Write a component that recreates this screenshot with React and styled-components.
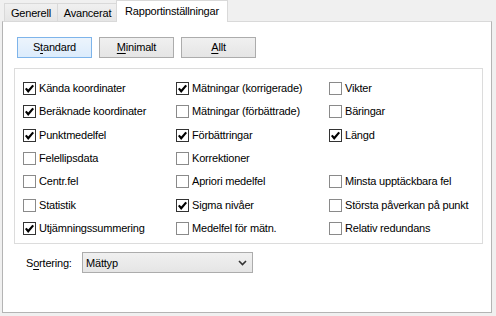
import React, { useState } from "react";
import styled, { createGlobalStyle } from "styled-components";

const GlobalStyle = createGlobalStyle`
  html, body {
    margin: 0;
    padding: 0;
    background: #f0f0f0;
  }
  body {
    font-family: "Liberation Sans", Arial, sans-serif;
    font-size: 11px;
    letter-spacing: -0.2px;
    color: #000;
  }
`;

const items = [
  ["Kända koordinater", true],
  ["Mätningar (korrigerade)", true],
  ["Vikter", false],
  ["Beräknade koordinater", true],
  ["Mätningar (förbättrade)", false],
  ["Bäringar", false],
  ["Punktmedelfel", true],
  ["Förbättringar", true],
  ["Längd", true],
  ["Felellipsdata", false],
  ["Korrektioner", false],
  null,
  ["Centr.fel", false],
  ["Apriori medelfel", false],
  ["Minsta upptäckbara fel", false],
  ["Statistik", false],
  ["Sigma nivåer", true],
  ["Största påverkan på punkt", false],
  ["Utjämningssummering", true],
  ["Medelfel för mätn.", false],
  ["Relativ redundans", false],
];

function App() {
  const [checks, setChecks] = useState(items.map((it) => (it ? it[1] : false)));

  const toggle = (i) => {
    const next = [...checks];
    next[i] = !next[i];
    setChecks(next);
  };

  return (
    <Window>
      <GlobalStyle />
      <TabStrip>
        <Tab w={53}>Generell</Tab>
        <Tab w={60}>Avancerat</Tab>
        <Tab w={112} active>Rapportinställningar</Tab>
      </TabStrip>
      <Panel>
        <ButtonRow>
          <Button primary>
            S<u>t</u>andard
          </Button>
          <Button>
            <u>M</u>inimalt
          </Button>
          <Button>
            <u>A</u>llt
          </Button>
        </ButtonRow>

        <GroupBox>
          {items.map((it, i) =>
            it ? (
              <CheckRow key={i} onClick={() => toggle(i)}>
                <Box checked={checks[i]}>
                  {checks[i] && (
                    <svg width="11" height="11" viewBox="0 0 11 11">
                      <path d="M1.8 5.4 L4.2 8.2 L9.2 2.4" fill="none" stroke="#000" strokeWidth="2.2" />
                    </svg>
                  )}
                </Box>
                <Label>{it[0]}</Label>
              </CheckRow>
            ) : (
              <span key={i} />
            )
          )}
        </GroupBox>

        <SortRow>
          <SortLabel>
            S<u>o</u>rtering:
          </SortLabel>
          <Select>
            <span>Mättyp</span>
            <svg width="9" height="6" viewBox="0 0 9 6">
              <path d="M1 1 L4.5 4.5 L8 1" fill="none" stroke="#333" strokeWidth="1.6" />
            </svg>
          </Select>
        </SortRow>
      </Panel>
    </Window>
  );
}

const Window = styled.div`
  width: 496px;
  height: 316px;
  box-sizing: border-box;
  padding: 0 4px 0 2px;
  background: #f0f0f0;
`;

const TabStrip = styled.div`
  display: flex;
  align-items: flex-end;
  height: 22px;
  padding-left: 2px;
  position: relative;
  z-index: 1;
  margin-bottom: -1px;
`;

const Tab = styled.div`
  box-sizing: border-box;
  width: ${(p) => p.w}px;
  height: ${(p) => (p.active ? "22px" : "19px")};
  padding-top: ${(p) => (p.active ? "3px" : "2px")};
  margin-left: ${(p) => (p.active ? "-1px" : "0")};
  text-align: center;
  border: 1px solid #d9d9d9;
  border-bottom: ${(p) => (p.active ? "none" : "1px solid #d9d9d9")};
  border-right: ${(p) => (p.active ? "1px solid #d9d9d9" : "none")};
  background: ${(p) => (p.active ? "#fff" : "linear-gradient(#f0f0f0, #e5e5e5)")};
  line-height: 14px;
  white-space: nowrap;
`;

const Panel = styled.div`
  box-sizing: border-box;
  height: 292px;
  background: #fff;
  border: 1px solid #b4b4b4;
  border-top-color: #d9d9d9;
  padding: 15px 0 0 14px;
`;

const ButtonRow = styled.div`
  display: flex;
  gap: 7px;
`;

const Button = styled.div`
  box-sizing: border-box;
  width: 75px;
  height: 21px;
  line-height: 19px;
  text-align: center;
  border: 1px solid ${(p) => (p.primary ? "#7eb4ea" : "#acacac")};
  background: ${(p) => (p.primary ? "linear-gradient(#ecf4fc, #dcecfc)" : "linear-gradient(#f0f0f0, #e5e5e5)")};
  cursor: default;
  u {
    text-decoration-thickness: 1px;
    text-underline-offset: 2px;
  }
`;

const GroupBox = styled.div`
  box-sizing: border-box;
  width: 469px;
  height: 176px;
  margin: 10px 0 0 -3px;
  border: 1px solid #dcdcdc;
  padding: 13px 0 0 8px;
  display: grid;
  grid-template-columns: 153px 153px 153px;
  grid-auto-rows: 23.33px;
`;

const CheckRow = styled.label`
  display: flex;
  align-items: flex-start;
  gap: 3px;
  cursor: default;
  user-select: none;
`;

const Box = styled.span`
  box-sizing: border-box;
  width: 13px;
  height: 13px;
  flex: none;
  border: 1px solid ${(p) => (p.checked ? "#333" : "#8a8a8a")};
  background: #fff;
  display: flex;
  align-items: center;
  justify-content: center;
`;

const Label = styled.span`
  line-height: 13px;
  white-space: nowrap;
`;

const SortRow = styled.div`
  display: flex;
  align-items: center;
  margin-top: 8px;
  padding-left: 9px;
`;

const SortLabel = styled.span`
  width: 56px;
  u {
    text-underline-offset: 2px;
  }
`;

const Select = styled.div`
  box-sizing: border-box;
  width: 171px;
  height: 21px;
  border: 1px solid #acacac;
  background: linear-gradient(#f0f0f0, #e5e5e5);
  display: flex;
  align-items: center;
  justify-content: space-between;
  padding: 0 5px 0 3px;
`;

export default App;
